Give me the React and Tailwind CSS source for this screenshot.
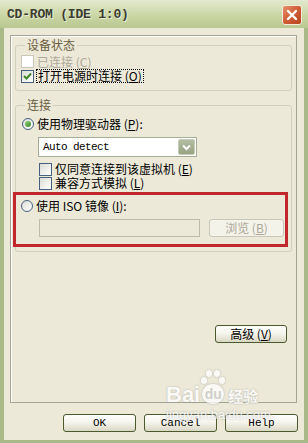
import React from "react";

function Check({ checked, disabled }) {
  return (
    <span
      className={`w-[13px] h-[13px] shrink-0 border flex items-center justify-center ${
        disabled
          ? "border-[#cac8bb] bg-white"
          : "border-[#47607e] bg-gradient-to-br from-[#dcdcd5] to-white"
      }`}
    >
      {checked && (
        <svg width="9" height="9" viewBox="0 0 9 9">
          <polyline points="1,4 3.5,6.5 8,1.5" fill="none" stroke="#3d8a2a" strokeWidth="2" />
        </svg>
      )}
    </span>
  );
}

function Radio({ checked }) {
  return (
    <span className="w-[12px] h-[12px] shrink-0 rounded-full border border-[#47607e] bg-gradient-to-br from-[#dcdcd5] to-white flex items-center justify-center">
      {checked && <span className="w-[6px] h-[6px] rounded-full bg-gradient-to-br from-[#8fd07a] to-[#2f8a1e]" />}
    </span>
  );
}

function Btn({ children, className, disabled }) {
  return (
    <div
      className={`h-[18px] flex items-center justify-center rounded-[3px] border ${
        disabled
          ? "border-[#c9c7ba] text-[#aca899] bg-[#f4f3ea]"
          : "border-[#4a5a2c] bg-gradient-to-b from-white via-[#f4f3ea] to-[#d9d7c4] text-black"
      } ${className}`}
    >
      {children}
    </div>
  );
}

function U({ children }) {
  return <span className="underline underline-offset-1">{children}</span>;
}

export default function App() {
  return (
    <div className="relative w-[308px] h-[443px] flex flex-col bg-[#a9b987] overflow-hidden font-['Noto_Sans_CJK_SC',sans-serif] text-[12px] leading-[14px] text-black">
      {/* title bar */}
      <div className="h-[28px] shrink-0 flex items-center justify-between pl-[7px] pr-[6px] pt-[1px] bg-gradient-to-b from-[#e4e9cf] via-[#cdd8a8] to-[#b9c790]">
        <span className="font-['Liberation_Mono',monospace] font-bold text-[13px] tracking-[-0.2px] text-[#3b3d30] [text-shadow:1px_1px_0_#e8ecd6]">
          CD-ROM (IDE 1:0)
        </span>
        <div className="w-[20px] h-[20px] rounded-[3px] border border-[#f3ead8] bg-gradient-to-br from-[#e5906d] via-[#cf5d36] to-[#b7431f] flex items-center justify-center">
          <svg width="12" height="12" viewBox="0 0 12 12">
            <path d="M2 2 L10 10 M10 2 L2 10" stroke="#fff" strokeWidth="2.4" strokeLinecap="round" />
          </svg>
        </div>
      </div>

      {/* body */}
      <div className="flex-1 mx-[4px] mb-[3px] bg-[#ece9d8] flex flex-col pl-[6px] pr-[7px] pt-[7px]">
        {/* tab panel */}
        <div className="h-[368px] shrink-0 border border-[#a3a697] bg-[#ece9d8] shadow-[inset_1px_1px_0_#fff] px-[4px] pt-[3px] flex flex-col">
          {/* group 1 */}
          <fieldset className="border border-[#d0d0bf] rounded-[3px] px-[5px] pt-[4px] pb-[7px]">
            <legend className="ml-[4px] px-[2px] text-[#6b5d3f] leading-[12px]">设备状态</legend>
            <div className="h-[13px] flex items-center gap-[3px] text-[#aca899] leading-[13px]">
              <Check disabled />
              <span>已连接 (<U>C</U>)</span>
            </div>
            <div className="mt-[1px] h-[14px] flex items-center gap-[2px]">
              <Check checked />
              <span className="border border-dotted border-black px-[1px] leading-[12px]">
                打开电源时连接 (<U>O</U>)
              </span>
            </div>
          </fieldset>

          {/* group 2 */}
          <fieldset className="mt-[8px] border border-[#d0d0bf] rounded-[3px] pl-[5px] pr-[5px] pt-[6px] pb-[14px]">
            <legend className="ml-[4px] px-[2px] text-[#6b5d3f] leading-[12px]">连接</legend>
            <div className="h-[14px] flex items-center gap-[3px] pl-[1px]">
              <Radio checked />
              <span>使用物理驱动器 (<U>P</U>):</span>
            </div>
            <div className="mt-[6px] ml-[17px] w-[159px] h-[20px] border border-[#a4ad95] bg-white flex items-center justify-between pl-[4px] pr-[1px]">
              <span className="font-['Liberation_Mono',monospace] text-[11px] tracking-[-0.6px]">Auto detect</span>
              <div className="w-[17px] h-[16px] rounded-[2px] bg-gradient-to-b from-[#b3bda1] to-[#97a383] border border-[#c5ccb5] flex items-center justify-center">
                <svg width="9" height="7" viewBox="0 0 9 7">
                  <polyline points="1,1.5 4.5,5 8,1.5" fill="none" stroke="#fff" strokeWidth="2" />
                </svg>
              </div>
            </div>
            <div className="mt-[5px] ml-[18px] h-[14px] flex items-center gap-[3px]">
              <Check />
              <span>仅同意连接到该虚拟机 (<U>E</U>)</span>
            </div>
            <div className="ml-[18px] h-[14px] flex items-center gap-[3px]">
              <Check />
              <span>兼容方式模拟 (<U>L</U>)</span>
            </div>

            <div className="relative mt-[9px]">
              <div className="h-[14px] flex items-center gap-[3px]">
                <Radio />
                <span>使用 ISO 镜像 (<U>I</U>):</span>
              </div>
              <div className="mt-[6px] flex items-center gap-[9px] ml-[18px]">
                <div className="w-[161px] h-[18px] border border-[#bdbbad] bg-[#ece9d8]" />
                <Btn disabled className="w-[75px]">
                  浏览 (<U>B</U>)
                </Btn>
              </div>
              <div className="absolute left-[-8px] top-[-7px] right-[-2px] bottom-[-10px] border-[3px] border-[#c1272d]" />
            </div>
          </fieldset>

          <div className="mt-[73px] flex justify-end pr-[5px]">
            <Btn className="w-[72px]">
              高级 (<U>V</U>)
            </Btn>
          </div>
        </div>

        {/* bottom buttons */}
        <div className="mt-[11px] flex justify-end gap-[8px] mr-[-1px] font-['Liberation_Mono',monospace] text-[11px]">
          <Btn className="w-[73px]">OK</Btn>
          <Btn className="w-[73px]">Cancel</Btn>
          <Btn className="w-[73px]">Help</Btn>
        </div>
      </div>

      {/* watermark */}
      <div className="absolute left-[166px] top-[368px] w-[112px] h-[52px] opacity-75 pointer-events-none">
        <div className="flex items-end">
          <span className="font-['Liberation_Sans',sans-serif] font-bold text-[22px] leading-[22px] text-white [text-shadow:0_0_2px_#9a9a9a] mt-[16px]">
            Bai
          </span>
          <div className="relative w-[26px] h-[36px]">
            <span className="absolute left-[6px] top-[0px] w-[6px] h-[7px] rounded-full bg-white shadow-[0_0_2px_#999]" />
            <span className="absolute left-[14px] top-[0px] w-[6px] h-[7px] rounded-full bg-white shadow-[0_0_2px_#999]" />
            <span className="absolute left-[1px] top-[7px] w-[6px] h-[7px] rounded-full bg-white shadow-[0_0_2px_#999]" />
            <span className="absolute left-[19px] top-[7px] w-[6px] h-[7px] rounded-full bg-white shadow-[0_0_2px_#999]" />
            <span className="absolute left-[2px] top-[14px] w-[22px] h-[20px] rounded-full bg-white shadow-[0_0_2px_#999] flex items-center justify-center font-['Liberation_Sans',sans-serif] font-bold text-[14px] text-[#c8c8c8]">
              du
            </span>
          </div>
          <span className="ml-[2px] mb-[1px] text-[15px] leading-[18px] font-bold text-white [text-shadow:0_0_2px_#9a9a9a]">经验</span>
        </div>
        <div className="font-['Liberation_Sans',sans-serif] text-[13px] leading-[13px] text-white [text-shadow:0_0_2px_#8a8a8a] mt-[2px]">
          jingyan.baidu.com
        </div>
      </div>
    </div>
  );
}
